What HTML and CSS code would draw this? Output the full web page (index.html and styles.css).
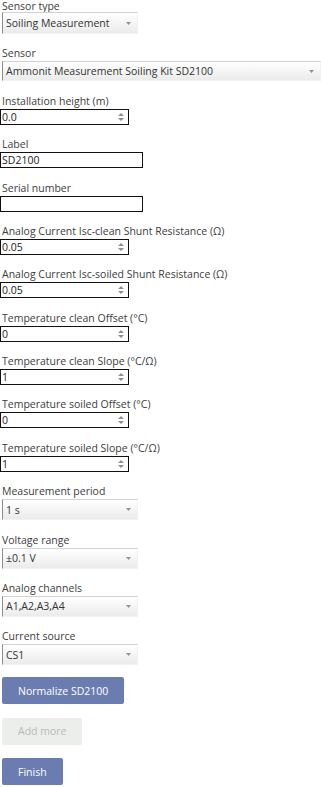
FILE: index.html
```html
<!DOCTYPE html>
<html>
<head>
<meta charset="utf-8">
<link rel="stylesheet" href="styles.css">
</head>
<body>
<form class="form">
  <div class="field">
    <label class="lbl lbl-first">Sensor type</label>
    <div class="select sel-first sel-short"><span class="sel-text">Soiling Measurement</span><svg class="arrow" width="5" height="3" viewBox="0 0 5 3"><path d="M0 0H5L2.5 3Z" fill="#929292"/></svg></div>
  </div>
  <div class="field">
    <label class="lbl">Sensor</label>
    <div class="select sel-second sel-wide"><span class="sel-text">Ammonit Measurement Soiling Kit SD2100</span><svg class="arrow" width="5" height="3" viewBox="0 0 5 3"><path d="M0 0H5L2.5 3Z" fill="#929292"/></svg></div>
  </div>
  <div class="field">
    <label class="lbl">Installation height (m)</label>
    <div class="numbox"><input class="inp" type="text" value="0.0"><svg class="spin" width="6" height="8" viewBox="0 0 6 8"><path d="M3 0L6 3H0Z M3 8L6 5H0Z" fill="#8f8f8f"/></svg></div>
  </div>
  <div class="field">
    <label class="lbl">Label</label>
    <input class="textbox" type="text" value="SD2100">
  </div>
  <div class="field">
    <label class="lbl">Serial number</label>
    <input class="textbox" type="text" value="">
  </div>
  <div class="field">
    <label class="lbl">Analog Current Isc-clean Shunt Resistance (Ω)</label>
    <div class="numbox"><input class="inp" type="text" value="0.05"><svg class="spin" width="6" height="8" viewBox="0 0 6 8"><path d="M3 0L6 3H0Z M3 8L6 5H0Z" fill="#8f8f8f"/></svg></div>
  </div>
  <div class="field">
    <label class="lbl">Analog Current Isc-soiled Shunt Resistance (Ω)</label>
    <div class="numbox"><input class="inp" type="text" value="0.05"><svg class="spin" width="6" height="8" viewBox="0 0 6 8"><path d="M3 0L6 3H0Z M3 8L6 5H0Z" fill="#8f8f8f"/></svg></div>
  </div>
  <div class="field">
    <label class="lbl">Temperature clean Offset (°C)</label>
    <div class="numbox"><input class="inp" type="text" value="0"><svg class="spin" width="6" height="8" viewBox="0 0 6 8"><path d="M3 0L6 3H0Z M3 8L6 5H0Z" fill="#8f8f8f"/></svg></div>
  </div>
  <div class="field">
    <label class="lbl">Temperature clean Slope (°C/Ω)</label>
    <div class="numbox"><input class="inp" type="text" value="1"><svg class="spin" width="6" height="8" viewBox="0 0 6 8"><path d="M3 0L6 3H0Z M3 8L6 5H0Z" fill="#8f8f8f"/></svg></div>
  </div>
  <div class="field">
    <label class="lbl">Temperature soiled Offset (°C)</label>
    <div class="numbox"><input class="inp" type="text" value="0"><svg class="spin" width="6" height="8" viewBox="0 0 6 8"><path d="M3 0L6 3H0Z M3 8L6 5H0Z" fill="#8f8f8f"/></svg></div>
  </div>
  <div class="field">
    <label class="lbl">Temperature soiled Slope (°C/Ω)</label>
    <div class="numbox"><input class="inp" type="text" value="1"><svg class="spin" width="6" height="8" viewBox="0 0 6 8"><path d="M3 0L6 3H0Z M3 8L6 5H0Z" fill="#8f8f8f"/></svg></div>
  </div>
  <div class="field">
    <label class="lbl">Measurement period</label>
    <div class="select sel-short"><span class="sel-text">1 s</span><svg class="arrow" width="5" height="3" viewBox="0 0 5 3"><path d="M0 0H5L2.5 3Z" fill="#929292"/></svg></div>
  </div>
  <div class="field">
    <label class="lbl">Voltage range</label>
    <div class="select sel-short"><span class="sel-text">±0.1 V</span><svg class="arrow" width="5" height="3" viewBox="0 0 5 3"><path d="M0 0H5L2.5 3Z" fill="#929292"/></svg></div>
  </div>
  <div class="field">
    <label class="lbl">Analog channels</label>
    <div class="select sel-short"><span class="sel-text">A1,A2,A3,A4</span><svg class="arrow" width="5" height="3" viewBox="0 0 5 3"><path d="M0 0H5L2.5 3Z" fill="#929292"/></svg></div>
  </div>
  <div class="field">
    <label class="lbl">Current source</label>
    <div class="select sel-short"><span class="sel-text">CS1</span><svg class="arrow" width="5" height="3" viewBox="0 0 5 3"><path d="M0 0H5L2.5 3Z" fill="#929292"/></svg></div>
  </div>
  <div class="buttons">
    <button type="button" class="btn btn-primary">Normalize SD2100</button>
    <button type="button" class="btn btn-disabled">Add more</button>
    <button type="button" class="btn btn-primary">Finish</button>
  </div>
</form>
</body>
</html>
```

FILE: styles.css
```css
html, body {
  margin: 0;
  padding: 0;
  background: #ffffff;
}
body {
  font-family: "Open Sans", "Noto Sans", sans-serif;
  font-size: 10.5px;
  color: #3a3a3a;
  overflow: hidden;
}
.form {
  display: flex;
  flex-direction: column;
}
.field {
  display: flex;
  flex-direction: column;
  align-items: flex-start;
  margin-bottom: 12.375px;
}
.lbl {
  display: block;
  padding-left: 2px;
  height: 15px;
  line-height: 15px;
  font-size: 10.5px;
  color: #3d3d3d;
  white-space: nowrap;
}
.lbl-first {
  height: 12px;
  line-height: 12px;
}
.select {
  box-sizing: border-box;
  display: flex;
  align-items: center;
  justify-content: space-between;
  height: 21px;
  margin-left: 2px;
  padding: 0 6px 0 3px;
  border-top: 1px solid #d2d2d2;
  border-left: 1px solid #8c8c8c;
  border-right: 1px solid #f2f2f2;
  border-bottom: 1px solid #f2f2f2;
  background: linear-gradient(#ffffff, #ebebeb);
  color: #333333;
}
.sel-first {
  height: 22px;
}
.sel-second {
  height: 20px;
}
.sel-short {
  width: 136px;
}
.sel-wide {
  width: 319px;
}
.sel-text {
  font-size: 10.5px;
  line-height: 14px;
  white-space: nowrap;
}
.arrow {
  flex: none;
}
.numbox {
  box-sizing: border-box;
  display: flex;
  align-items: center;
  width: 129px;
  height: 16px;
  border: 1px solid #111111;
  background: #ffffff;
  padding-right: 4px;
}
.inp {
  flex: 1;
  min-width: 0;
  border: none;
  outline: none;
  padding: 0 0 0 1px;
  margin: 0;
  height: 14px;
  font-family: "Open Sans", "Noto Sans", sans-serif;
  font-size: 10.5px;
  color: #222222;
  background: transparent;
}
.spin {
  flex: none;
}
.textbox {
  box-sizing: border-box;
  width: 143px;
  height: 16px;
  margin: 0;
  padding: 0 0 0 1px;
  border: 1px solid #111111;
  outline: none;
  font-family: "Open Sans", "Noto Sans", sans-serif;
  font-size: 10.5px;
  color: #222222;
  background: #ffffff;
}
.buttons {
  display: flex;
  flex-direction: column;
  align-items: flex-start;
  gap: 13.5px;
  margin-top: -0.5px;
  padding-left: 2px;
}
.btn {
  box-sizing: border-box;
  height: 27px;
  padding: 0 16px;
  border: none;
  border-radius: 2px;
  font-family: "Open Sans", "Noto Sans", sans-serif;
  font-size: 10.5px;
}
.btn-primary {
  background: #6b7cb1;
  color: #ffffff;
}
.btn-disabled {
  background: #eceeec;
  color: #b8bbb8;
}
```
